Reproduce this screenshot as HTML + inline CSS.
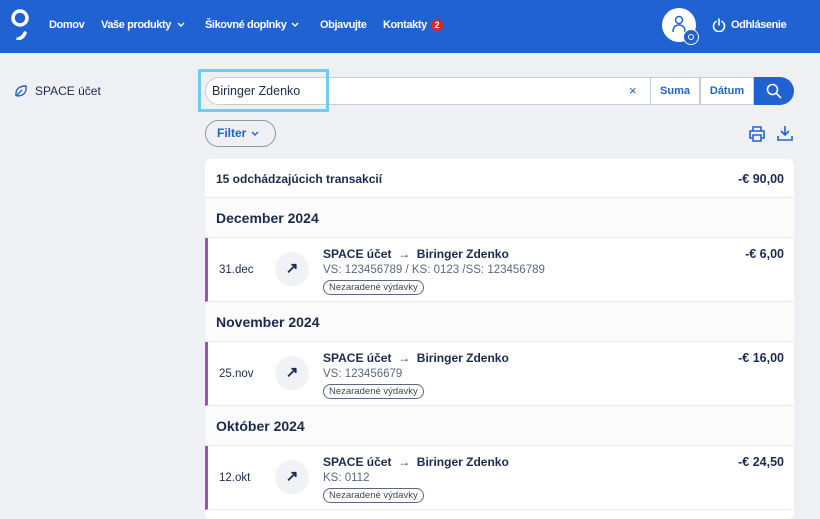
<!DOCTYPE html>
<html><head><meta charset="utf-8"><style>
*{margin:0;padding:0;box-sizing:border-box}
body{width:820px;height:505px;overflow:hidden;background:#eef0f4;font-family:"Liberation Sans",sans-serif;color:#1b2a4e;position:relative}
.hdr{position:absolute;left:0;top:0;width:820px;height:53px;background:#2162d3;color:#fff;font-weight:bold;font-size:11px;letter-spacing:-0.4px}
.hdr span.n{position:absolute;top:19px;white-space:nowrap}
.a{position:absolute}
.card{position:absolute;left:205px;top:159px;width:589px;height:360px;background:#fff;border-radius:6px;overflow:hidden}
.row{position:absolute;left:0;width:589px;border-bottom:1px solid #e6e8ec}
.mon{font-weight:bold;font-size:14px;background:#fbfbfc}
.tx{border-left:3px solid #a44cb8}
.ic{position:absolute;left:67px;top:14px;width:34px;height:34px;border-radius:50%;background:#f0f2f5;text-align:center;line-height:34px;font-size:15px;font-weight:bold}
.t1{position:absolute;left:115px;top:9px;font-weight:bold;font-size:12px}
.t2{position:absolute;left:115px;top:26px;font-size:11.5px;color:#5d6880}
.tag{position:absolute;left:115px;top:42px;font-size:9.5px;border:1px solid #5d6880;border-radius:8px;padding:1px 5px;color:#3c4660}
.amt{position:absolute;right:10px;top:9px;font-weight:bold;font-size:12.5px}
.d{position:absolute;left:11px;top:26px;font-size:11.5px}
.ch{position:absolute;top:20px}
</style></head><body>
<div class="hdr">
<svg class="a" style="left:9px;top:8px" width="22" height="32" viewBox="0 0 22 32"><circle cx="11" cy="10" r="7" fill="none" stroke="#fff" stroke-width="3.5"/><path d="M16 25 Q14 30 9 31" stroke="#fff" stroke-width="3.5" fill="none" stroke-linecap="round"/></svg>
<span class="n" style="left:49px">Domov</span>
<span class="n" style="left:101px">Vaše produkty</span>
<svg class="ch" style="left:176px" width="10" height="10" viewBox="0 0 10 10"><path d="M2 3l3 3 3-3" fill="none" stroke="#fff" stroke-width="1.4"/></svg>
<span class="n" style="left:205px">Šikovné doplnky</span>
<svg class="ch" style="left:290px" width="10" height="10" viewBox="0 0 10 10"><path d="M2 3l3 3 3-3" fill="none" stroke="#fff" stroke-width="1.4"/></svg>
<span class="n" style="left:320px">Objavujte</span>
<span class="n" style="left:383px">Kontakty</span>
<span class="a" style="left:431px;top:19px;width:12px;height:12px;border-radius:50%;background:#d42a2a;font-size:9px;text-align:center;line-height:12px;letter-spacing:0">2</span>
<div class="a" style="left:662px;top:8px;width:34px;height:34px;border-radius:50%;background:#fff"></div>
<svg class="a" style="left:671px;top:15px" width="16" height="18" viewBox="0 0 16 18"><circle cx="8" cy="5" r="3.5" fill="none" stroke="#2162d3" stroke-width="1.5"/><path d="M2 17 Q2 10 8 10 Q14 10 14 17" fill="none" stroke="#2162d3" stroke-width="1.5"/></svg>
<div class="a" style="left:683px;top:29px;width:16px;height:16px;border-radius:50%;background:#2162d3;border:1.5px solid #fff"></div>
<svg class="a" style="left:687px;top:33px" width="8" height="8" viewBox="0 0 8 8"><circle cx="4" cy="4" r="2.5" fill="none" stroke="#fff" stroke-width="1"/></svg>
<svg class="a" style="left:712px;top:18px" width="14" height="14" viewBox="0 0 14 14"><path d="M4 3.5A5.5 5.5 0 1 0 10 3.5M7 1v6" fill="none" stroke="#fff" stroke-width="1.6" stroke-linecap="round"/></svg>
<span class="n" style="left:731px">Odhlásenie</span>
</div>
<svg class="a" style="left:14px;top:84px" width="14" height="14" viewBox="0 0 14 14"><path d="M2 12 Q1 2 12 2 Q13 12 3 12 M2 12 L8 6" fill="none" stroke="#2162d3" stroke-width="1.4"/></svg>
<span class="a" style="left:35px;top:84px;font-size:12px">SPACE účet</span>
<div class="a" style="left:205px;top:77px;width:446px;height:28px;background:#fff;border:1px solid #c6ccd6;border-radius:14px 0 0 14px"></div>
<span class="a" style="left:212px;top:84px;font-size:12.5px">Biringer Zdenko</span>
<span class="a" style="left:629px;top:83px;font-size:13px;color:#2162d3">×</span>
<div class="a" style="left:650px;top:77px;width:50px;height:28px;background:#fff;border:1px solid #c6ccd6;font-size:11px;font-weight:bold;color:#2162d3;text-align:center;line-height:26px">Suma</div>
<div class="a" style="left:700px;top:77px;width:54px;height:28px;background:#fff;border:1px solid #c6ccd6;font-size:11px;font-weight:bold;color:#2162d3;text-align:center;line-height:26px">Dátum</div>
<div class="a" style="left:754px;top:77px;width:40px;height:28px;background:#2162d3;border-radius:0 14px 14px 0"></div>
<svg class="a" style="left:766px;top:83px" width="16" height="16" viewBox="0 0 16 16"><circle cx="6.5" cy="6.5" r="5" fill="none" stroke="#fff" stroke-width="1.6"/><path d="M10.5 10.5L15 15" stroke="#fff" stroke-width="1.6"/></svg>
<div class="a" style="left:198px;top:69px;width:131px;height:43px;border:3px solid #6fcdf5"></div>
<div class="a" style="left:205px;top:120px;width:71px;height:27px;border:1px solid #8d97a8;border-radius:14px;font-size:12px;font-weight:bold;color:#2162d3;line-height:25px;padding-left:11px">Filter</div>
<svg class="a" style="left:250px;top:129px" width="10" height="10" viewBox="0 0 10 10"><path d="M2 3l3 3 3-3" fill="none" stroke="#2162d3" stroke-width="1.4"/></svg>
<svg class="a" style="left:749px;top:126px" width="16" height="16" viewBox="0 0 16 16"><path d="M4 5V1h8v4M3 12H1V5h14v7h-2M4 9h8v6H4z" fill="none" stroke="#2162d3" stroke-width="1.6"/></svg>
<svg class="a" style="left:777px;top:125px" width="16" height="16" viewBox="0 0 16 16"><path d="M8 1v9M4 6l4 4 4-4M1 11v4h14v-4" fill="none" stroke="#2162d3" stroke-width="1.6"/></svg>
<div class="card">
<div class="row" style="top:0;height:39px"><span class="a" style="left:11px;top:13px;font-size:12px;font-weight:bold">15 odchádzajúcich transakcií</span><span class="amt" style="top:13px">-€ 90,00</span></div>
<div class="row mon" style="top:39px;height:40px"><span class="a" style="left:11px;top:12px">December 2024</span></div>
<div class="row tx" style="top:79px;height:64px"><span class="d">31.dec</span><div class="ic">↗</div><span class="t1">SPACE účet &nbsp;→&nbsp; Biringer Zdenko</span><span class="t2">VS: 123456789 / KS: 0123 /SS: 123456789</span><span class="tag">Nezaradené výdavky</span><span class="amt">-€ 6,00</span></div>
<div class="row mon" style="top:143px;height:40px"><span class="a" style="left:11px;top:12px">November 2024</span></div>
<div class="row tx" style="top:183px;height:64px"><span class="d">25.nov</span><div class="ic">↗</div><span class="t1">SPACE účet &nbsp;→&nbsp; Biringer Zdenko</span><span class="t2">VS: 123456679</span><span class="tag">Nezaradené výdavky</span><span class="amt">-€ 16,00</span></div>
<div class="row mon" style="top:247px;height:40px"><span class="a" style="left:11px;top:12px">Október 2024</span></div>
<div class="row tx" style="top:287px;height:64px"><span class="d">12.okt</span><div class="ic">↗</div><span class="t1">SPACE účet &nbsp;→&nbsp; Biringer Zdenko</span><span class="t2">KS: 0112</span><span class="tag">Nezaradené výdavky</span><span class="amt">-€ 24,50</span></div>
</div>
</body></html>
